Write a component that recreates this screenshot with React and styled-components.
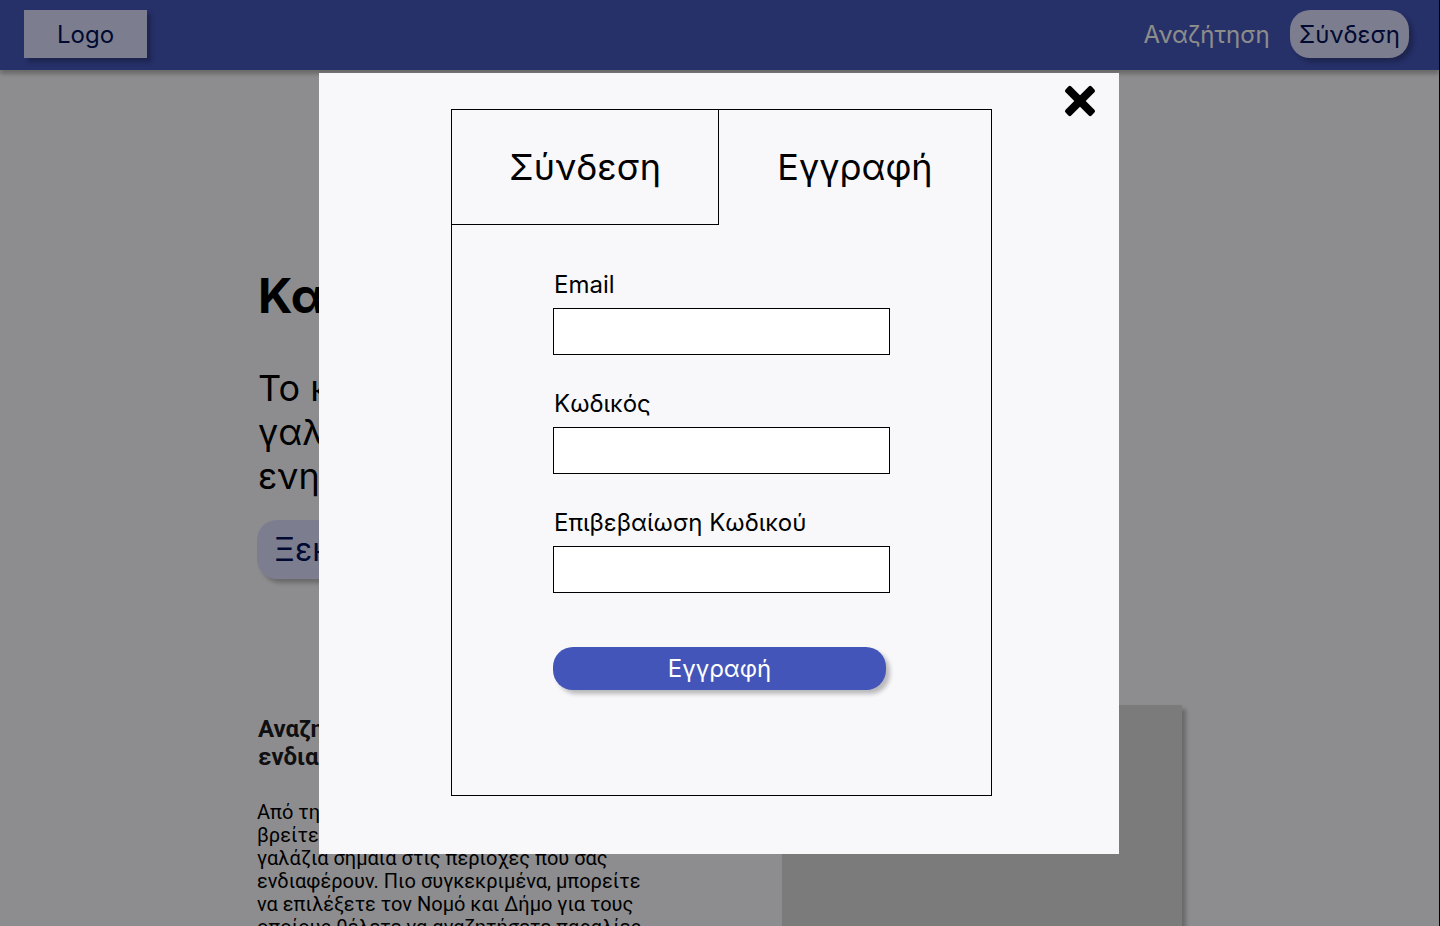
import React, { useState } from "react";
import styled, { createGlobalStyle } from "styled-components";

const GlobalStyle = createGlobalStyle`
  *, *::before, *::after { box-sizing: border-box; }
  body {
    margin: 0;
    overflow: hidden;
    background: #f8f8fb;
    color: #000;
    font-family: Inter, "Liberation Sans", sans-serif;
  }
  button, input { font: inherit; color: inherit; }
  button { border: 0; padding: 0; background: none; cursor: pointer; }
  h1, h2, p { margin: 0; }
`;

const Page = styled.div`
  height: 100vh;
  overflow: hidden;
  border-right: 1px solid #000;
`;

const Header = styled.header`
  display: flex;
  align-items: center;
  justify-content: space-between;
  height: 70px;
  padding: 0 30px 2px 24px;
  background: #4355b9;
  box-shadow: 0 4px 4px rgba(0, 0, 0, 0.25);
`;

const Logo = styled.a`
  padding: 2px 33px 0;
  background: #dbdcf9;
  color: #001159;
  font-size: 24px;
  line-height: 46px;
  text-decoration: none;
  box-shadow: 4px 4px 4px rgba(0, 0, 0, 0.25);
`;

const Nav = styled.nav`
  display: flex;
  align-items: center;
  gap: 20px;
  font-size: 24px;
  line-height: 46px;
`;

const NavLink = styled.a`
  padding-top: 2px;
  color: #f8f8f2;
  text-decoration: none;
`;

const NavButton = styled.button`
  padding: 2px 9px 0;
  border-radius: 20px;
  background: #dbdcf9;
  color: #001159;
  box-shadow: 4px 4px 4px rgba(0, 0, 0, 0.25);
`;

const Main = styled.main`
  width: 925px;
  max-width: 100%;
  margin: 0 auto;
`;

const Hero = styled.section`
  padding-top: 196px;
`;

const HeroTitle = styled.h1`
  padding-left: 1px;
  font-size: 48px;
  line-height: 60px;
`;

const HeroText = styled.p`
  width: 660px;
  margin-top: 40px;
  padding-left: 1px;
  font-size: 36px;
  line-height: 44px;
`;

const HeroButton = styled.button`
  margin-top: 22px;
  padding: 0 17px;
  border-radius: 20px;
  background: #dbdcf9;
  color: #001159;
  font-size: 32px;
  line-height: 59px;
  box-shadow: 4px 4px 4px rgba(0, 0, 0, 0.25);
`;

const Feature = styled.section`
  display: flex;
  justify-content: space-between;
  padding-top: 126px;
  font-family: Roboto, "Liberation Sans", sans-serif;
`;

const FeatureCopy = styled.div`
  width: 400px;
  padding-top: 10px;
`;

const FeatureTitle = styled.h2`
  padding-left: 1px;
  color: #1b1b1f;
  font-size: 24px;
  line-height: 28px;
`;

const FeatureText = styled.p`
  margin-top: 30px;
  font-size: 20px;
  line-height: 23px;
`;

const FeatureImage = styled.div`
  width: 400px;
  height: 400px;
  background: #d9d9d9;
  box-shadow: 4px 4px 4px rgba(0, 0, 0, 0.25);
`;

const Backdrop = styled.div`
  position: fixed;
  inset: 0;
  display: grid;
  place-items: center;
  padding-right: 2px;
  background: rgba(0, 0, 0, 0.43);
`;

const Dialog = styled.div`
  position: relative;
  width: 800px;
  padding: 36px 127px 58px 132px;
  background: #f8f8fb;
`;

const CloseButton = styled.button`
  position: absolute;
  top: 12px;
  right: 23px;
  width: 32px;
  height: 32px;

  svg { display: block; }
`;

const Panel = styled.div`
  border: 1px solid #000;
`;

const Tabs = styled.div`
  display: grid;
  grid-template-columns: 267px 1fr;
`;

const Tab = styled.button`
  height: 115px;
  border: solid #000;
  border-width: ${({ $active }) => ($active ? "0" : "0 1px 1px 0")};
  font-size: 36px;
  line-height: 44px;
`;

const Form = styled.form`
  display: flex;
  flex-direction: column;
  padding: 45px 101px 105px;
`;

const Field = styled.label`
  display: flex;
  flex-direction: column;
  gap: 9px;
  margin-bottom: 34px;
  font-size: 24px;
  line-height: 29px;

  span { padding-left: 1px; }
`;

const TextInput = styled.input`
  width: 100%;
  height: 47px;
  padding: 0 12px;
  border: 1px solid #000;
  border-radius: 0;
  background: #fff;
`;

const Submit = styled.button`
  height: 43px;
  margin: 20px 4px 0 0;
  border-radius: 20px;
  background: #4355b9;
  color: #fff;
  font-size: 24px;
  line-height: 29px;
  box-shadow: 4px 4px 4px rgba(0, 0, 0, 0.25);
`;

const fields = [
  { name: "email", type: "email", label: "Email" },
  { name: "password", type: "password", label: "Κωδικός" },
  { name: "confirm", type: "password", label: "Επιβεβαίωση Κωδικού" },
];

const tabs = ["Σύνδεση", "Εγγραφή"];

export default function App() {
  const [open, setOpen] = useState(true);
  const [active, setActive] = useState("Εγγραφή");

  return (
    <>
      <GlobalStyle />
      <Page>
        <Header>
          <Logo href="#">Logo</Logo>
          <Nav>
            <NavLink href="#search">Αναζήτηση</NavLink>
            <NavButton type="button" onClick={() => setOpen(true)}>Σύνδεση</NavButton>
          </Nav>
        </Header>
        <Main>
          <Hero>
            <HeroTitle>Κα</HeroTitle>
            <HeroText>
              Το κ<br />
              γαλ<br />
              ενη
            </HeroText>
            <HeroButton type="button">Ξεκ</HeroButton>
          </Hero>
          <Feature id="search">
            <FeatureCopy>
              <FeatureTitle>
                Αναζη<br />
                ενδια
              </FeatureTitle>
              <FeatureText>
                Από τη<br />
                βρείτε<br />
                γαλάζια σημαία στις περιοχές που σας ενδιαφέρουν. Πιο συγκεκριμένα, μπορείτε
                να επιλέξετε τον Νομό και Δήμο για τους οποίους θέλετε να αναζητήσετε παραλίες
              </FeatureText>
            </FeatureCopy>
            <FeatureImage />
          </Feature>
        </Main>
      </Page>
      {open && (
        <Backdrop>
          <Dialog role="dialog" aria-modal="true" aria-label={active}>
            <CloseButton type="button" aria-label="Κλείσιμο" onClick={() => setOpen(false)}>
              <svg width="32" height="32" viewBox="0 0 32 32" aria-hidden="true">
                <rect x="-2.4" y="12" width="36.8" height="8" rx="2" transform="rotate(45 16 16)" />
                <rect x="-2.4" y="12" width="36.8" height="8" rx="2" transform="rotate(-45 16 16)" />
              </svg>
            </CloseButton>
            <Panel>
              <Tabs role="tablist">
                {tabs.map((name) => (
                  <Tab
                    key={name}
                    type="button"
                    role="tab"
                    aria-selected={active === name}
                    $active={active === name}
                    onClick={() => setActive(name)}
                  >
                    {name}
                  </Tab>
                ))}
              </Tabs>
              <Form onSubmit={(event) => event.preventDefault()}>
                {fields.map(({ name, type, label }) => (
                  <Field key={name}>
                    <span>{label}</span>
                    <TextInput type={type} name={name} />
                  </Field>
                ))}
                <Submit type="submit">{active}</Submit>
              </Form>
            </Panel>
          </Dialog>
        </Backdrop>
      )}
    </>
  );
}
